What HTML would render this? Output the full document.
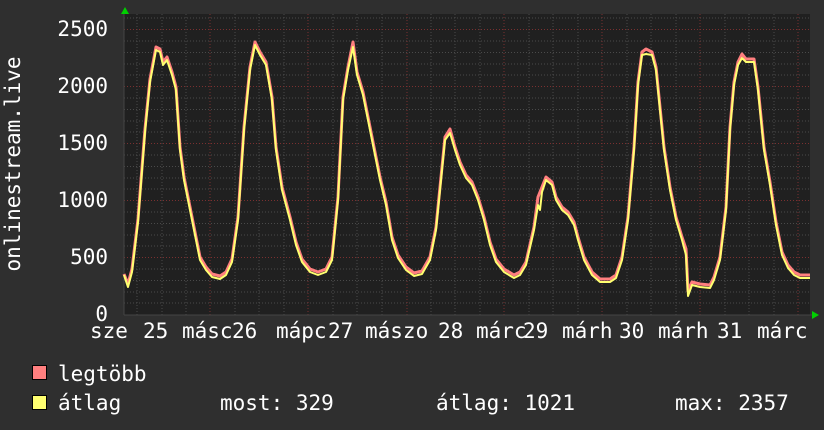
<!DOCTYPE html>
<html><head><meta charset="utf-8"><style>
html,body{margin:0;padding:0;background:#2f2f2f;}
svg{display:block}
text{font-family:"DejaVu Sans Mono","Liberation Mono",monospace;fill:#fff;font-size:21px}
</style></head><body>
<svg width="824" height="430" xmlns="http://www.w3.org/2000/svg">
<rect width="824" height="430" fill="#2f2f2f"/>
<rect x="124" y="14" width="686" height="301" fill="#202020"/>
<g id="grid" stroke-width="1" shape-rendering="crispEdges">
<g stroke="#4a4a4a" stroke-dasharray="1,2">
<path d="M124 18.1H810M124 41H810M124 52.4H810M124 63.8H810M124 75.2H810M124 98H810M124 109.4H810M124 120.8H810M124 132.2H810M124 155H810M124 166.4H810M124 177.8H810M124 189.2H810M124 212H810M124 223.4H810M124 234.8H810M124 246.2H810M124 269H810M124 280.4H810M124 291.8H810M124 303.2H810"/>
<path d="M137 14V315M162 14V315M186 14V315M235 14V315M259 14V315M284 14V315M333 14V315M357 14V315M382 14V315M431 14V315M455 14V315M480 14V315M529 14V315M553 14V315M578 14V315M627 14V315M651 14V315M676 14V315M725 14V315M749 14V315M774 14V315"/>
</g>
<g stroke="#7a3030" stroke-dasharray="1,2">
<path d="M124 29.5H810M124 86.5H810M124 143.5H810M124 200.5H810M124 257.5H810"/>
<path d="M210 14V315M308 14V315M407 14V315M504 14V315M602 14V315M700 14V315M798 14V315"/>
</g>
</g>
<path d="M124 315H814M124 315V10" stroke="#444" stroke-width="1"/>
<polygon points="121,14 125,7 129,14" fill="#00d000"/>
<polygon points="812,311 819,315 812,319" fill="#00d000"/>
<g fill="none" stroke-linejoin="round">
<polyline stroke="#ff7f7f" stroke-width="3" transform="translate(0,-1)" points="124,275 128,285 132,270 138,220 145,130 150,80 156,48 160,50 163,63 167,58 172,73 176,88 180,148 184,178 190,208 196,238 200,258 206,268 212,275 220,277 226,273 232,260 238,218 244,128 250,68 255,43 260,53 266,63 272,98 276,148 282,188 290,218 296,243 302,260 310,270 318,273 326,270 332,258 338,198 343,98 348,68 353,43 357,73 363,93 368,118 374,148 380,178 386,203 392,238 398,256 406,268 414,274 422,272 430,258 436,228 441,178 445,138 450,130 455,148 460,163 466,176 472,183 478,198 484,218 490,243 496,260 504,270 514,276 520,273 526,263 534,228 538,198 542,188 546,178 552,183 556,198 562,208 568,213 574,223 578,238 584,258 592,273 600,280 610,280 616,276 622,258 628,218 634,148 638,83 642,53 646,50 652,53 656,68 660,108 664,148 670,188 676,218 682,238 686,250 688,292 692,283 700,285 710,286 714,278 720,258 726,208 730,128 734,83 738,63 742,55 746,60 754,60 758,88 764,148 770,183 776,223 782,253 788,266 794,273 800,276 810,276"/>
<polyline stroke="#ffff70" stroke-width="2" points="124,275 128,287 132,272 138,222 145,132 150,82 156,50 160,52 163,65 167,60 172,75 176,90 180,150 184,180 190,210 196,240 200,260 206,270 212,277 220,279 226,275 232,262 238,220 244,130 250,70 255,45 260,55 266,65 272,100 276,150 282,190 290,220 296,245 302,262 310,272 318,275 326,272 332,260 338,200 343,100 348,70 353,47 357,75 363,95 368,120 374,150 380,180 386,205 392,240 398,258 406,270 414,276 422,274 430,260 436,230 441,180 445,140 450,133 455,150 460,165 466,178 472,185 478,200 484,220 490,245 496,262 504,272 514,278 520,275 526,265 534,230 538,205 540,210 542,192 546,180 552,185 556,200 562,210 568,215 574,225 578,240 584,260 592,275 600,282 610,282 616,278 622,260 628,220 634,150 638,85 642,55 646,54 652,55 656,70 660,110 664,150 670,190 676,220 682,240 686,255 688,296 692,285 700,287 710,288 714,280 720,260 726,210 730,130 734,85 738,65 742,58 746,62 754,62 758,90 764,150 770,185 776,225 782,255 788,268 794,275 800,278 810,278"/>
</g>
<g text-anchor="end">
<text x="108" y="36">2500</text>
<text x="108" y="93">2000</text>
<text x="108" y="150">1500</text>
<text x="108" y="207">1000</text>
<text x="108" y="264">500</text>
<text x="108" y="321">0</text>
</g>
<text transform="translate(20,164) rotate(-90)" text-anchor="middle">onlinestream.live</text>
<g>
<text x="90" y="338">sze</text>
<text x="143" y="338">25</text>
<text x="182" y="338">másc</text>
<text x="232" y="338">26</text>
<text x="276" y="338">mápc</text>
<text x="328" y="338">27</text>
<text x="365" y="338">mászo</text>
<text x="438" y="338">28</text>
<text x="476" y="338">márc</text>
<text x="523" y="338">29</text>
<text x="562" y="338">márh</text>
<text x="619" y="338">30</text>
<text x="658" y="338">márh</text>
<text x="717" y="338">31</text>
<text x="757" y="338">márc</text>
</g>
<rect x="32.5" y="365.5" width="14" height="14" fill="#ff7f7f" stroke="#000"/>
<rect x="32.5" y="395.5" width="14" height="14" fill="#ffff70" stroke="#000"/>
<text x="58" y="381">legtöbb</text>
<text x="58" y="410">átlag</text>
<text x="220" y="410">most: 329</text>
<text x="436" y="410">átlag: 1021</text>
<text x="675" y="410">max: 2357</text>
</svg>
</body></html>
